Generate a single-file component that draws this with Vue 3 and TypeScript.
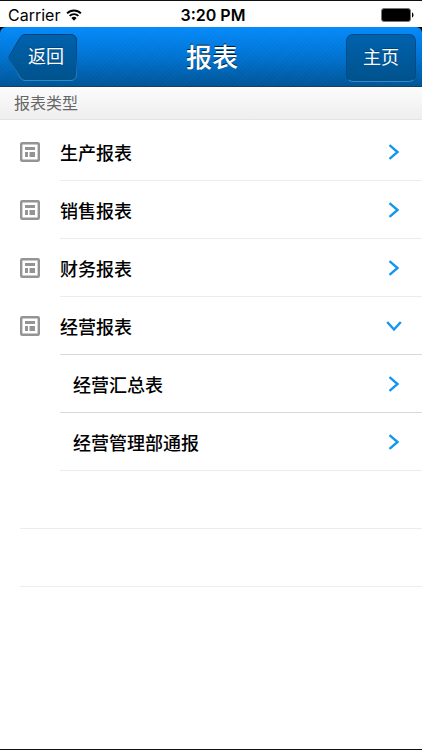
<script setup lang="ts">
import { computed, ref } from 'vue'

interface Report {
  title: string
  children: string[]
}

const reports: Report[] = [
  { title: '生产报表', children: [] },
  { title: '销售报表', children: [] },
  { title: '财务报表', children: [] },
  { title: '经营报表', children: ['经营汇总表', '经营管理部通报'] },
]

const opened = ref('经营报表')

const rows = computed(() =>
  reports.flatMap((report) => {
    const open = report.children.length > 0 && opened.value === report.title
    const parent = { title: report.title, child: false, open, strong: open }
    const children = open
      ? report.children.map((title, i) => ({
          title,
          child: true,
          open: false,
          strong: i < report.children.length - 1,
        }))
      : []
    return [parent, ...children]
  }),
)

function toggle(title: string) {
  opened.value = opened.value === title ? '' : title
}
</script>

<template>
  <div class="screen">
    <div class="status">
      <div class="carrier">
        <span>Carrier</span>
        <svg class="wifi" viewBox="0 0 16 12" aria-hidden="true">
          <path d="M1.1 4.3a9.8 9.8 0 0 1 13.8 0M3.6 6.9a6.3 6.3 0 0 1 8.8 0" fill="none" stroke="#000" stroke-width="1.9" />
          <path d="M8 11.7 5.4 9.1a3.7 3.7 0 0 1 5.2 0z" fill="#000" />
        </svg>
      </div>
      <span class="clock">3:20 PM</span>
      <svg class="battery" viewBox="0 0 33 14" aria-hidden="true">
        <rect x="0.5" y="0.5" width="29" height="13" rx="2.5" fill="#000" stroke="#777" />
        <path d="M31 4.5c2 .6 2 4.4 0 5z" fill="#000" />
      </svg>
    </div>

    <div class="header-back">
      <header class="header">
        <button class="nav back" type="button">
          <svg class="back-shape" viewBox="0 0 70 48" aria-hidden="true">
            <defs>
              <linearGradient id="back-fill" x1="0" y1="0" x2="0" y2="1">
                <stop offset="0" stop-color="#0062ad" />
                <stop offset="1" stop-color="#00528c" />
              </linearGradient>
              <linearGradient id="back-edge" x1="0" y1="0" x2="0" y2="1">
                <stop offset="0" stop-color="#003f78" />
                <stop offset="0.5" stop-color="#0b4d82" />
                <stop offset="1" stop-color="#3387c2" />
              </linearGradient>
            </defs>
            <path
              d="M17 0.5H63a5.500 5.500 0 0 1 5.500 5.500V41a5.500 5.500 0 0 1-5.500 5.500H17q-3 0-4.500-2.500L1.500 25.500q-1.200-2 0-4L12.500 3Q14 0.500 17 0.500z"
              fill="url(#back-fill)"
              stroke="url(#back-edge)"
            />
          </svg>
          <span class="back-label">返回</span>
        </button>
        <h1 class="title">报表</h1>
        <button class="nav home" type="button">主页</button>
      </header>
    </div>

    <h2 class="section">报表类型</h2>

    <ul class="list">
      <li v-for="row in rows" :key="row.title" class="row">
        <button
          class="item"
          :class="{ child: row.child }"
          type="button"
          @click="!row.child && toggle(row.title)"
        >
          <svg v-if="!row.child" class="icon" viewBox="0 0 20 20" aria-hidden="true">
            <rect x="1.200" y="1.200" width="17.600" height="17.600" rx="1" fill="none" stroke="#949494" stroke-width="2.400" />
            <path d="M5 5h10v3H5zM5 10h3v5H5zM9.500 10H15v5H9.500z" fill="#949494" />
          </svg>
          <span class="body" :class="{ strong: row.strong }">
            <span class="label">{{ row.title }}</span>
            <svg class="chevron" viewBox="0 0 16 16" aria-hidden="true">
              <path
                :d="row.open ? 'M1.200 4 8 11.500 14.800 4' : 'M3.500 1.200 11.500 8 3.500 14.800'"
                fill="none"
                stroke="#1296ee"
                stroke-width="2.400"
              />
            </svg>
          </span>
        </button>
      </li>
      <li class="blank" aria-hidden="true"></li>
      <li class="blank" aria-hidden="true"></li>
    </ul>
  </div>
</template>

<style>
body {
  background: #fff;
}
</style>

<style scoped>
.screen {
  box-sizing: border-box;
  min-height: 100vh;
  border-top: 1px solid #111;
  border-bottom: 1px solid #111;
  background: #fff;
  color: #000;
  font-family: 'Liberation Sans', 'Noto Sans CJK SC', sans-serif;
}

button {
  border: 0;
  margin: 0;
  font-family: inherit;
  cursor: pointer;
}

.status {
  display: grid;
  grid-template-columns: 1fr auto 1fr;
  align-items: center;
  height: 26px;
  padding: 0 8px;
  font-family: Inter, sans-serif;
  font-size: 16px;
  line-height: 28px;
}

.carrier {
  display: flex;
  align-items: center;
  gap: 6px;
}

.wifi {
  width: 16px;
  height: 12px;
}

.clock {
  padding-left: 4px;
  font-weight: 600;
}

.battery {
  justify-self: end;
  width: 33px;
  height: 14px;
}

.header-back {
  background: #000;
}

.header {
  box-sizing: border-box;
  display: grid;
  grid-template-columns: 70px 1fr 70px;
  align-items: center;
  height: 60px;
  padding: 2px 6px 0 8px;
  border-bottom: 1px solid #1c3d5c;
  border-radius: 6px 6px 0 0;
  background:
    repeating-linear-gradient(135deg, rgba(255, 255, 255, 0.02) 0 1px, transparent 1px 3px),
    linear-gradient(#058bfb, #0073d2 50%, #005596);
}

.nav {
  height: 48px;
  padding: 0;
  color: #fff;
  font-size: 18px;
  line-height: 46px;
  text-shadow: 0 -1px 0 #00467c;
}

.back {
  display: grid;
  background: none;
}

.back-shape,
.back-label {
  grid-area: 1 / 1;
}

.back-shape {
  width: 70px;
  height: 48px;
}

.back-label {
  z-index: 1;
  padding-left: 6px;
}

.home {
  box-sizing: border-box;
  border: 1px solid #004b88;
  border-bottom-color: #3387c2;
  border-radius: 7px;
  background: linear-gradient(#0062ad, #00528c);
}

.title {
  margin: 0;
  color: #fff;
  font-size: 26px;
  font-weight: 500;
  line-height: 56px;
  text-align: center;
  text-shadow: 0 -1px 0 #062030;
}

.section {
  box-sizing: border-box;
  height: 33px;
  margin: 0;
  padding: 0 14px;
  border-bottom: 1px solid #e4e4e4;
  background: linear-gradient(#fcfcfc, #eee);
  color: #666;
  font-size: 16px;
  font-weight: 400;
  line-height: 34px;
}

.list {
  margin: 0;
  padding: 3px 0 0;
  list-style: none;
}

.item {
  display: flex;
  align-items: center;
  gap: 20px;
  width: 100%;
  height: 58px;
  padding: 0 0 0 20px;
  background: none;
  color: #000;
  font-size: 18px;
  font-weight: 500;
  text-align: left;
}

.item.child {
  padding-left: 60px;
}

.icon {
  flex: none;
  width: 20px;
  height: 20px;
}

.body {
  box-sizing: border-box;
  display: flex;
  flex: 1;
  align-items: center;
  justify-content: space-between;
  height: 58px;
  padding-right: 20px;
  border-bottom: 1px solid #ececec;
}

.body.strong {
  border-bottom-color: #d9d9d9;
}

.child .label {
  padding-left: 13px;
}

.chevron {
  width: 16px;
  height: 16px;
}

.blank {
  box-sizing: border-box;
  height: 58px;
  margin-left: 20px;
  border-bottom: 1px solid #ececec;
}
</style>
